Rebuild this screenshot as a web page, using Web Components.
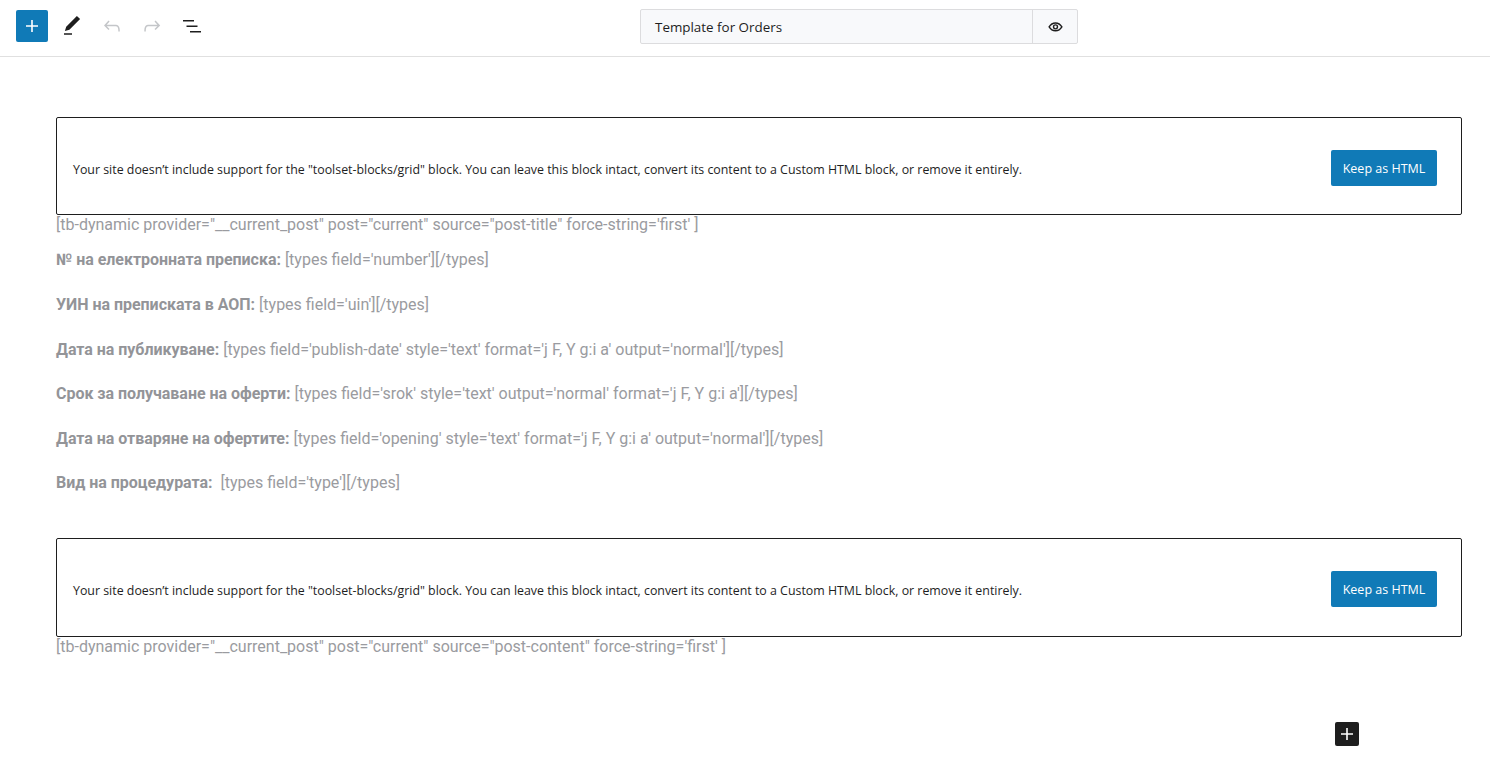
<!DOCTYPE html>
<html><head><meta charset="utf-8"><style>
html,body{margin:0;height:100%;background:#fff;overflow:hidden}
body{font-family:Roboto,sans-serif}
</style></head><body>
<editor-page></editor-page>
<script>
const P={plus:'M18 11.2h-5.2V6h-1.6v5.2H6v1.6h5.2V18h1.6v-5.2H18z',
edit:'M20.1 5.1L16.9 2 6.2 12.7l-1.3 4.4 4.5-1.3L20.1 5.1zM4 20.8h8v-1.5H4v1.5z',
undo:'M18.3 11.7c-.6-.6-1.4-.9-2.3-.9H6.7l2.9-3.3-1.1-1-4.5 5L8.5 16l1-1-2.7-2.7H16c.5 0 .9.2 1.3.5 1 1 1 3.4 1 4.5v.3h1.5v-.2c0-1.5 0-4.3-1.5-5.7z',
redo:'M15.6 6.5l-1.1 1 2.9 3.3H8c-.9 0-1.7.3-2.3.9-1.4 1.5-1.4 4.2-1.4 5.6v.2h1.5v-.3c0-1.1 0-3.5 1-4.5.3-.3.7-.5 1.3-.5h9.2L14.5 15l1.1 1.1 4.6-4.6-4.6-5z',
list:'M3 6h11v1.5H3V6zm3.5 5.5h11V13h-11v-1.5zM21 17H10v1.5h11V17z'};
const svg=(n,s=24)=>`<svg width="${s}" height="${s}" viewBox="0 0 24 24" fill="currentColor" fill-rule="evenodd"><path d="${P[n]}"/></svg>`;
const eye=`<svg width="17" height="17" viewBox="0 0 24 24" fill="none" stroke="currentColor" stroke-width="2"><path d="M3 12.5s3.300-5.500 9-5.500 9 5.500 9 5.500-3.300 5.500-9 5.500-9-5.500-9-5.500z"/><circle cx="12" cy="12.500" r="2.800"/></svg>`;
const UI='"Open Sans","Noto Sans",sans-serif';

class ToolBtn extends HTMLElement{connectedCallback(){
 const n=this.getAttribute('icon');
 this.attachShadow({mode:'open'}).innerHTML=`<style>:host{display:flex;width:40px;height:32px;align-items:center;justify-content:center;color:${this.hasAttribute('off')?'#c4c6c9':'#1e1e1e'}}
 :host([primary]){width:32px;background:#107ab7;color:#fff;border-radius:2px;margin-right:4px}svg{display:block}</style>${svg(n)}`;
}}
customElements.define('tool-btn',ToolBtn);

class TitleBox extends HTMLElement{connectedCallback(){
 this.attachShadow({mode:'open'}).innerHTML=`<style>:host{display:flex;width:438px;height:35px;margin-top:1px;box-sizing:border-box;border:1px solid #dcdcde;border-radius:2px;background:#f8f9fb;color:#1e1e1e;font:500 13.400px ${UI}}
 .t{flex:1;display:flex;align-items:center;padding-left:14px}
 .e{width:45px;display:flex;align-items:center;justify-content:center;border-left:1px solid #dcdcde;padding-bottom:1px;box-sizing:border-box}
 svg{display:block}</style><div class="t"><slot></slot></div><div class="e">${eye}</div>`;
}}
customElements.define('title-box',TitleBox);

class TopBar extends HTMLElement{connectedCallback(){
 this.attachShadow({mode:'open'}).innerHTML=`<style>:host{display:grid;grid-template-columns:624px 438px 1fr;align-items:center;height:57px;box-sizing:border-box;border-bottom:1px solid #e0e0e0;padding:0 0 4px 16px;background:#fff}
 .l{display:flex;align-items:center}</style>
 <div class="l"><tool-btn icon="plus" primary></tool-btn><tool-btn icon="edit"></tool-btn><tool-btn icon="undo" off></tool-btn><tool-btn icon="redo" off></tool-btn><tool-btn icon="list"></tool-btn></div>
 <title-box>Template for Orders</title-box><div></div>`;
}}
customElements.define('top-bar',TopBar);

class MissingBlock extends HTMLElement{connectedCallback(){
 this.attachShadow({mode:'open'}).innerHTML=`<style>:host{display:flex;align-items:flex-start;justify-content:space-between;height:98px;box-sizing:border-box;border:1px solid #1e1e1e;border-radius:2px;padding:32px 24px 0 16px;font:12.380px/36px ${UI};color:#1e1e1e}
 :host([tall]){height:99px}
 span{margin-top:2px}
 .b{width:106px;height:36px;box-sizing:border-box;padding-top:2px;background:#107ab7;color:#fff;border-radius:2px;display:flex;align-items:center;justify-content:center;font-size:12.500px}</style>
 <span>Your site doesn’t include support for the "toolset-blocks/grid" block. You can leave this block intact, convert its content to a Custom HTML block, or remove it entirely.</span><div class="b">Keep as HTML</div>`;
}}
customElements.define('missing-block',MissingBlock);

class MetaLine extends HTMLElement{connectedCallback(){
 this.attachShadow({mode:'open'}).innerHTML=`<style>:host{display:block;height:44.600px;font:16px/24px Roboto,sans-serif;color:#9a9ba0;white-space:pre}
 b{font-weight:700;color:#939498;letter-spacing:-.03px}</style><b>${this.getAttribute('label')}</b> <slot></slot>`;
}}
customElements.define('meta-line',MetaLine);

class EditorPage extends HTMLElement{connectedCallback(){
 this.attachShadow({mode:'open'}).innerHTML=`<style>:host{display:block;height:757px;position:relative;font:16px/24px Roboto,sans-serif;color:#9a9ba0}
 main{padding:60px 28px 0 56px}
 .d{height:20px;line-height:20px}
 .meta{margin-top:13.450px;height:289.550px}
 .add{position:absolute;left:1335px;top:722px;width:24px;height:24px;background:#1e1e1e;color:#fff;border-radius:2px;display:flex;align-items:center;justify-content:center}
 svg{display:block}</style>
 <top-bar></top-bar>
 <main>
 <missing-block></missing-block>
 <div class="d">[tb-dynamic provider="__current_post" post="current" source="post-title" force-string='first' ]</div>
 <div class="meta">
 <meta-line label="№ на електронната преписка:">[types field='number'][/types]</meta-line>
 <meta-line label="УИН на преписката в АОП:">[types field='uin'][/types]</meta-line>
 <meta-line label="Дата на публикуване:">[types field='publish-date' style='text' format='j F, Y g:i a' output='normal'][/types]</meta-line>
 <meta-line label="Срок за получаване на оферти:">[types field='srok' style='text' output='normal' format='j F, Y g:i a'][/types]</meta-line>
 <meta-line label="Дата на отваряне на офертите:">[types field='opening' style='text' format='j F, Y g:i a' output='normal'][/types]</meta-line>
 <meta-line label="Вид на процедурата:"> [types field='type'][/types]</meta-line>
 </div>
 <missing-block tall></missing-block>
 <div class="d">[tb-dynamic provider="__current_post" post="current" source="post-content" force-string='first' ]</div>
 </main>
 <div class="add">${svg('plus')}</div>`;
}}
customElements.define('editor-page',EditorPage);
</script></body></html>
